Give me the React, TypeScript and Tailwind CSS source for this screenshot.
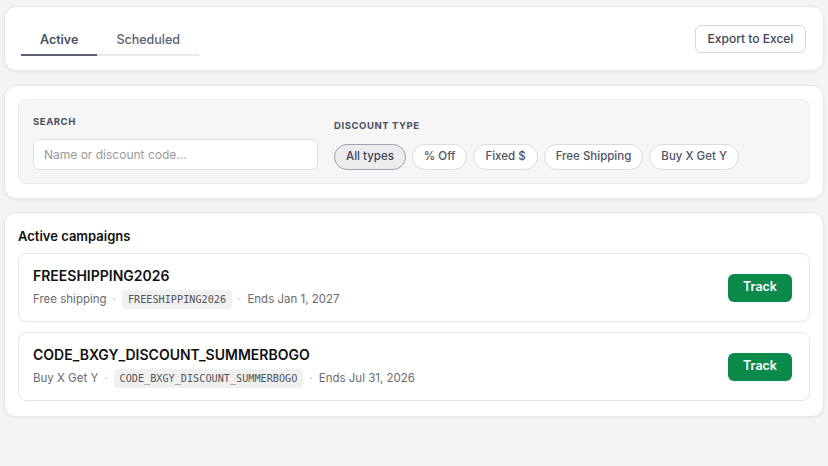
const campaigns = [
  {
    name: "FREESHIPPING2026",
    type: "Free shipping",
    code: "FREESHIPPING2026",
    ends: "Ends Jan 1, 2027",
  },
  {
    name: "CODE_BXGY_DISCOUNT_SUMMERBOGO",
    type: "Buy X Get Y",
    code: "CODE_BXGY_DISCOUNT_SUMMERBOGO",
    ends: "Ends Jul 31, 2026",
  },
];

const types = ["All types", "% Off", "Fixed $", "Free Shipping", "Buy X Get Y"];

function Card({ className, children }: { className: string; children: React.ReactNode }) {
  return (
    <div
      className={`bg-white border border-[#e6e6e6] rounded-xl shadow-[0_1px_3px_rgba(0,0,0,0.06)] ${className}`}
    >
      {children}
    </div>
  );
}

export default function App() {
  return (
    <div
      className="min-h-[466px] bg-[#f4f4f4] px-1 pt-1.5 flex flex-col"
      style={{ fontFamily: "Inter, 'Noto Sans', sans-serif" }}
    >
      {/* Tabs */}
      <Card className="h-[65px] mb-[14px] px-4 flex items-center justify-between">
        <div className="flex border-b-2 border-[#e8e8ea] self-end mb-[14px]">
          <button className="px-[19px] pb-[4px] leading-[20px] text-[12.5px] font-semibold text-[#4a4f63] border-b-2 border-[#5b5f73] -mb-[2px]">
            Active
          </button>
          <button className="px-[19px] pb-[4px] leading-[20px] text-[12.5px] font-medium text-[#5a5f72]">
            Scheduled
          </button>
        </div>
        <button className="h-[28px] w-[111px] mr-[1px] rounded-md border border-[#d6d6db] text-[12px] font-medium text-[#3f4458] bg-white">
          Export to Excel
        </button>
      </Card>

      {/* Filters */}
      <Card className="p-[13px] pb-[14px] mb-[13px]">
        <div className="bg-[#f6f6f6] border border-[#ebebeb] rounded-lg px-[14px] pt-[15px] pb-[13px] flex items-end gap-4">
          <div className="flex flex-col">
            <label className="text-[9.5px] font-bold tracking-[0.06em] text-[#4a4f63] leading-[14px] mb-[10px]">
              SEARCH
            </label>
            <input
              className="w-[285px] h-[31px] rounded-md border border-[#dedede] bg-white px-[10px] text-[12px] text-[#333] placeholder:text-[#9a9a9a] outline-none"
              placeholder="Name or discount code..."
            />
          </div>
          <div className="flex flex-col">
            <label className="text-[9.5px] font-bold tracking-[0.06em] text-[#4a4f63] leading-[14px] mb-[11px]">
              DISCOUNT TYPE
            </label>
            <div className="flex gap-1.5">
              {types.map((t, i) => (
                <button
                  key={t}
                  className={
                    i === 0
                      ? "h-[26px] px-[11px] rounded-full border border-[#9fa3ad] bg-[#ececec] text-[11.5px] font-medium text-[#3f4458]"
                      : "h-[26px] px-[11px] rounded-full border border-[#dcdcdc] bg-white text-[11.5px] font-medium text-[#4f5466]"
                  }
                >
                  {t}
                </button>
              ))}
            </div>
          </div>
        </div>
      </Card>

      {/* Campaigns */}
      <Card className="px-[13px] pt-[13px] pb-[15px]">
        <h2 className="text-[13px] font-semibold text-[#111] leading-5 mb-[7px]">Active campaigns</h2>
        <div className="flex flex-col gap-[10px]">
          {campaigns.map((c) => (
            <div
              key={c.name}
              className="h-[69px] border border-[#e6e6e6] rounded-lg bg-white pl-[14px] pr-[17px] flex items-center justify-between"
            >
              <div className="flex flex-col">
                <div className="text-[14px] font-semibold text-[#111] leading-5">{c.name}</div>
                <div className="flex items-center gap-1.5 mt-[4px] text-[11.5px] text-[#6b6b70]">
                  <span>{c.type}</span>
                  <span className="text-[#b5b5b5]">·</span>
                  <span
                    className="bg-[#f0f0f0] rounded px-[6px] h-[19px] leading-[19px] text-[10.2px] text-[#555]"
                    style={{ fontFamily: "'DejaVu Sans Mono', monospace" }}
                  >
                    {c.code}
                  </span>
                  <span className="text-[#b5b5b5]">·</span>
                  <span>{c.ends}</span>
                </div>
              </div>
              <button className="w-[64px] h-[28px] rounded-md bg-[#0c8a4c] text-white text-[12.5px] font-semibold">
                Track
              </button>
            </div>
          ))}
        </div>
      </Card>
    </div>
  );
}
